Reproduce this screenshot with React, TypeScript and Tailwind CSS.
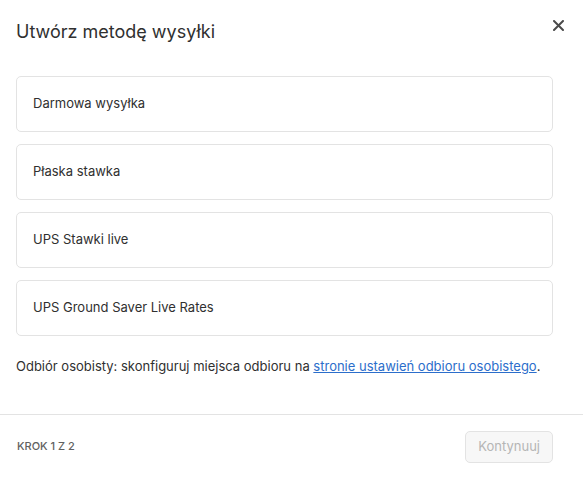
export default function App() {
  const items = ["Darmowa wysyłka", "Płaska stawka", "UPS Stawki live", "UPS Ground Saver Live Rates"];
  return (
    <div className="w-[583px] h-[478px] bg-white text-[#303030] relative" style={{ fontFamily: "Inter, 'Liberation Sans', sans-serif" }}>
      <button className="absolute left-[550px] top-[17px] w-[16px] h-[16px] flex items-center justify-center text-[#4a4a4a]">
        <svg width="11" height="11" viewBox="0 0 11 11"><path d="M1 1L10 10M10 1L1 10" stroke="currentColor" strokeWidth="2" strokeLinecap="round" /></svg>
      </button>
      <div className="pl-[16px] w-[553px]">
        <h1 className="pt-[20px] h-[76px] text-[18px] leading-[24px] text-[#303030]">Utwórz metodę wysyłki</h1>
        <div className="flex flex-col gap-[12px]">
          {items.map((t) => (
            <div key={t} className="h-[56px] border border-[#e3e3e3] rounded-[5px] flex items-center px-[16px] text-[13px]">{t}</div>
          ))}
        </div>
        <p className="mt-[20px] text-[13px] leading-[20px]">
          Odbiór osobisty: skonfiguruj miejsca odbioru na{" "}
          <a className="text-[#2c6ecb] underline">stronie ustawień odbioru osobistego</a>.
        </p>
      </div>
      <div className="absolute left-0 right-0 top-[414px] border-t border-[#e3e3e3] h-[64px] flex items-center justify-between pl-[17px] pr-[30px]">
        <span className="text-[11px] text-[#616161] font-medium">KROK 1 Z 2</span>
        <button className="h-[32px] px-[12px] rounded-[5px] border border-[#e3e3e3] bg-[#f7f7f7] text-[#b5b5b5] text-[13px]">Kontynuuj</button>
      </div>
    </div>
  );
}
